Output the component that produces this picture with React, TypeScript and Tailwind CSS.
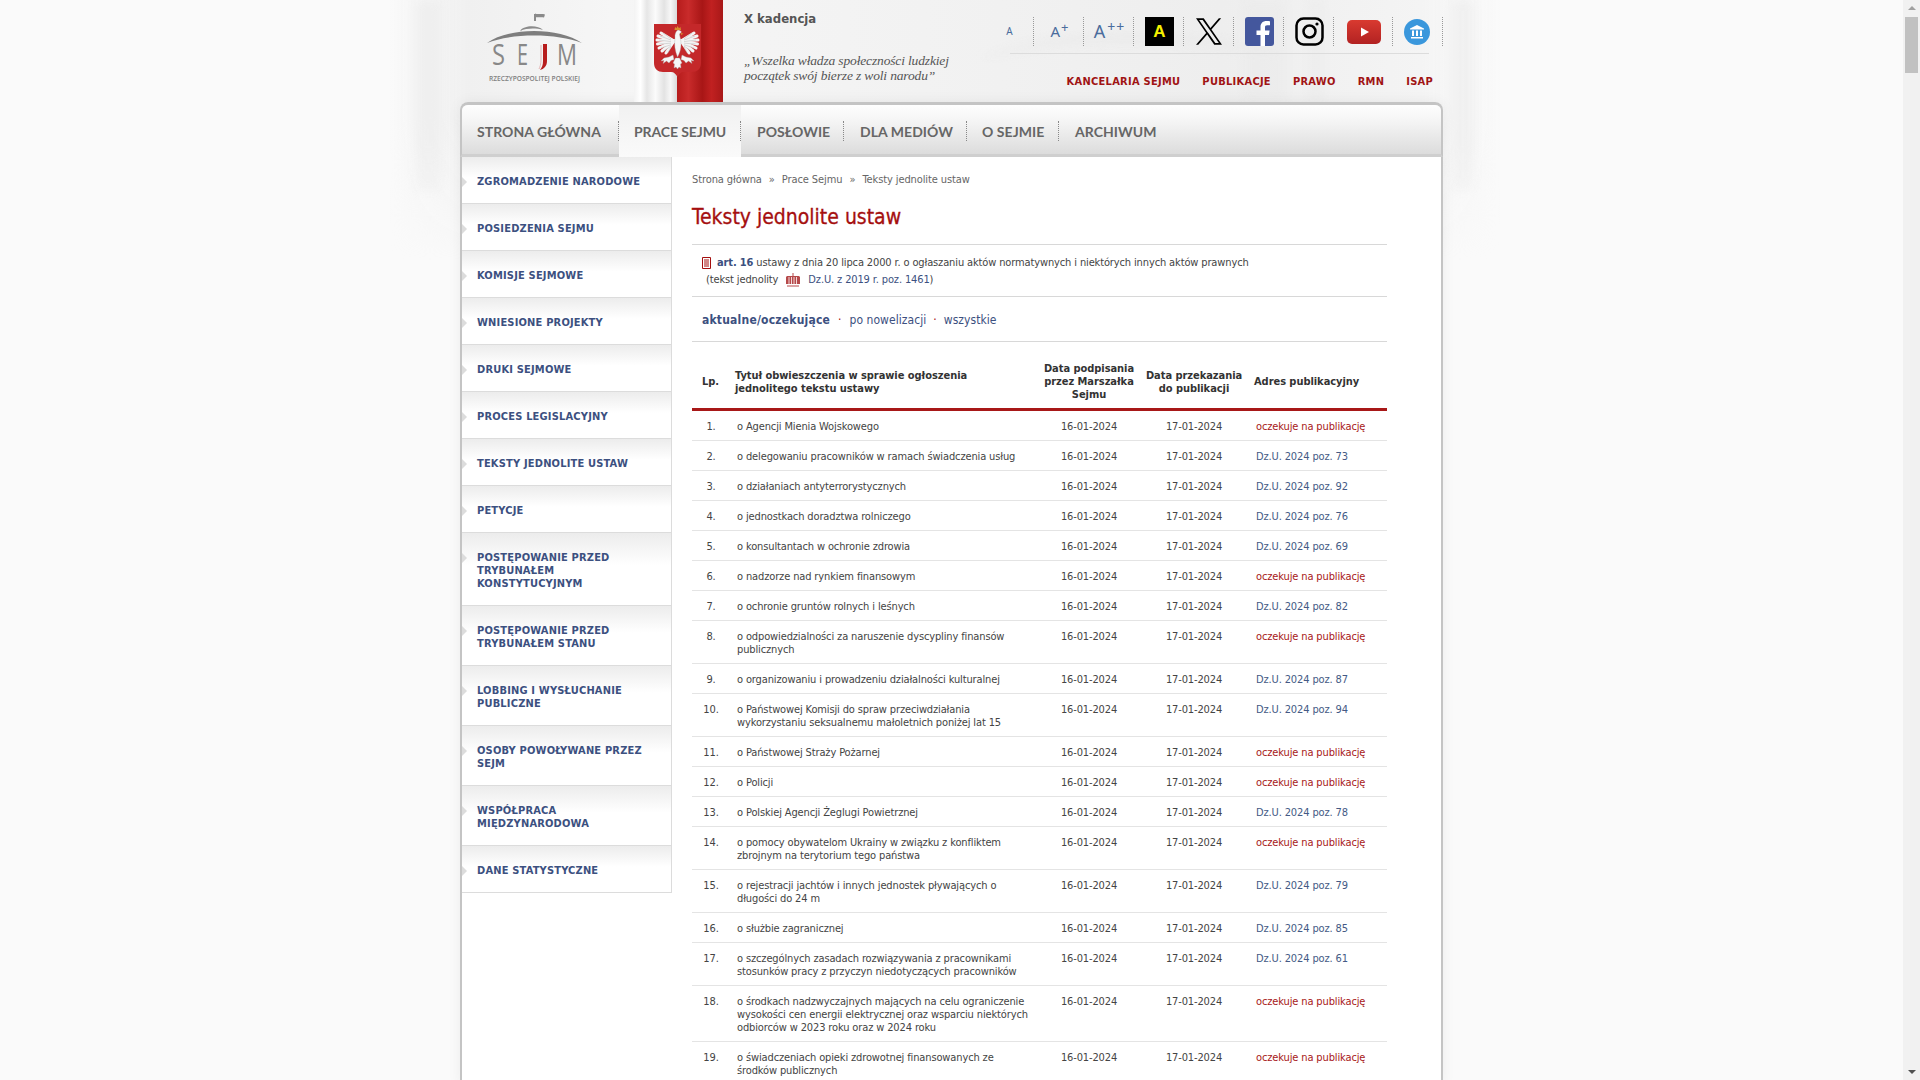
import React from 'react';

const sideItems = [
  ['ZGROMADZENIE NARODOWE'],
  ['POSIEDZENIA SEJMU'],
  ['KOMISJE SEJMOWE'],
  ['WNIESIONE PROJEKTY'],
  ['DRUKI SEJMOWE'],
  ['PROCES LEGISLACYJNY'],
  ['TEKSTY JEDNOLITE USTAW'],
  ['PETYCJE'],
  ['POSTĘPOWANIE PRZED', 'TRYBUNAŁEM', 'KONSTYTUCYJNYM'],
  ['POSTĘPOWANIE PRZED', 'TRYBUNAŁEM STANU'],
  ['LOBBING I WYSŁUCHANIE', 'PUBLICZNE'],
  ['OSOBY POWOŁYWANE PRZEZ', 'SEJM'],
  ['WSPÓŁPRACA', 'MIĘDZYNARODOWA'],
  ['DANE STATYSTYCZNE'],
];

const WAIT = 'oczekuje na publikację';

const rows: { title: string[]; pub: string }[] = [
  { title: ['o Agencji Mienia Wojskowego'], pub: WAIT },
  { title: ['o delegowaniu pracowników w ramach świadczenia usług'], pub: 'Dz.U. 2024 poz. 73' },
  { title: ['o działaniach antyterrorystycznych'], pub: 'Dz.U. 2024 poz. 92' },
  { title: ['o jednostkach doradztwa rolniczego'], pub: 'Dz.U. 2024 poz. 76' },
  { title: ['o konsultantach w ochronie zdrowia'], pub: 'Dz.U. 2024 poz. 69' },
  { title: ['o nadzorze nad rynkiem finansowym'], pub: WAIT },
  { title: ['o ochronie gruntów rolnych i leśnych'], pub: 'Dz.U. 2024 poz. 82' },
  { title: ['o odpowiedzialności za naruszenie dyscypliny finansów', 'publicznych'], pub: WAIT },
  { title: ['o organizowaniu i prowadzeniu działalności kulturalnej'], pub: 'Dz.U. 2024 poz. 87' },
  { title: ['o Państwowej Komisji do spraw przeciwdziałania', 'wykorzystaniu seksualnemu małoletnich poniżej lat 15'], pub: 'Dz.U. 2024 poz. 94' },
  { title: ['o Państwowej Straży Pożarnej'], pub: WAIT },
  { title: ['o Policji'], pub: WAIT },
  { title: ['o Polskiej Agencji Żeglugi Powietrznej'], pub: 'Dz.U. 2024 poz. 78' },
  { title: ['o pomocy obywatelom Ukrainy w związku z konfliktem', 'zbrojnym na terytorium tego państwa'], pub: WAIT },
  { title: ['o rejestracji jachtów i innych jednostek pływających o', 'długości do 24 m'], pub: 'Dz.U. 2024 poz. 79' },
  { title: ['o służbie zagranicznej'], pub: 'Dz.U. 2024 poz. 85' },
  { title: ['o szczególnych zasadach rozwiązywania z pracownikami', 'stosunków pracy z przyczyn niedotyczących pracowników'], pub: 'Dz.U. 2024 poz. 61' },
  { title: ['o środkach nadzwyczajnych mających na celu ograniczenie', 'wysokości cen energii elektrycznej oraz wsparciu niektórych', 'odbiorców w 2023 roku oraz w 2024 roku'], pub: WAIT },
  { title: ['o świadczeniach opieki zdrowotnej finansowanych ze', 'środków publicznych'], pub: WAIT },
];

const SejmLogo = () => (
  <svg width="95" height="72" viewBox="0 0 95 72" className="mt-[12px] shrink-0 overflow-visible">
    <path d="M48 2v7" stroke="#8a8a8a" strokeWidth="2" />
    <path d="M48 1.500c3 1.500 6-.5 10 1l-1 3c-3-1-6 .5-9-.5z" fill="#8a8a8a" />
    <path d="M33 19c4-6 18-6 23-1-7-2-16-2-23 1z" fill="#8a8a8a" />
    <path d="M0 31C22 15 72 15 95 31 70 21 24 21 0 31z" fill="#7e7e7e" />
    <text x="5" y="53" textLength="13" lengthAdjust="spacingAndGlyphs" fontFamily="'Open Sans',sans-serif" fontSize="29" fill="#888">S</text>
    <text x="30" y="53" textLength="11" lengthAdjust="spacingAndGlyphs" fontFamily="'Open Sans',sans-serif" fontSize="29" fill="#888">E</text>
    <path d="M56 32h4v17c0 5-3 8-7 9 2-3 3-5 3-9z" fill="#b71c1c" />
    <path d="M54 33v15c0 4-1 7-2 9" stroke="#e5b5b5" fill="none" />
    <text x="70" y="53" textLength="20" lengthAdjust="spacingAndGlyphs" fontFamily="'Open Sans',sans-serif" fontSize="29" fill="#888">M</text>
    <text x="2" y="69" textLength="91" lengthAdjust="spacingAndGlyphs" fontFamily="'Open Sans',sans-serif" fontSize="7" fontWeight="600" fill="#808080">RZECZYPOSPOLITEJ POLSKIEJ</text>
  </svg>
);

const feathers = [
  [7, 9], [4, 12], [3, 16], [3.500, 20], [5, 24], [8, 27], [12, 29],
];

const Shield = () => (
  <svg width="47" height="53" viewBox="0 0 47 53" className="absolute left-[20px] top-[24px]">
    <path d="M0 0h47v39c0 6-4 9-9 9h-8c-3 0-5 2-6.500 5-1.500-3-3.500-5-6.500-5H9c-5 0-9-3-9-9z" fill="#c4282a" />
    <g strokeLinecap="round" strokeWidth="3">
      {feathers.map(([x, y]) => (
        <g key={x + '-' + y}>
          <path d={`M20 17 L${x} ${y}`} stroke="#f4f4f4" />
          <path d={`M27 17 L${47 - x} ${y}`} stroke="#f4f4f4" />
        </g>
      ))}
    </g>
    <g strokeWidth=".4" stroke="#a8a8a8">
      {feathers.map(([x, y]) => (
        <g key={x + '_' + y}>
          <path d={`M17 ${18 + (y - 17) * 0.4} L${x + 2} ${y}`} />
          <path d={`M30 ${18 + (y - 17) * 0.4} L${45 - x} ${y}`} />
        </g>
      ))}
    </g>
    <g fill="#f6f6f6" stroke="#a9a9a9" strokeWidth=".35">
      <path d="M21 14c-.5-4 1-7 3-8 1.500 0 3 1 3.500 2l-2 2 .5 3c2 7 1 14-2.500 20-2.500-6-3.500-13-2.500-19z" />
      <path d="M19 31l-4 2-5 1-3 3 3-.5-1 3 3.500-2.500 2.500 2 2-2.500 3-1zM28 31l4 2 5 1 3 3-3-.5 1 3-3.500-2.500-2.500 2-2-2.500-3-1z" />
      <path d="M21.500 34h4l2.500 5-1.500 1 .5 4-2-1-1.500 2-1.500-2-2 1 .5-4-1.500-1z" />
    </g>
    <path d="M20.500 6l.6-3 1.400 1.300L23.500 2 25 4.300 26.400 3l.6 3z" fill="#d9902e" />
    <path d="M27 9l2.500.8-2.500 1.200z" fill="#d9902e" />
  </svg>
);

const CellIcon = ({ children, wide }: { children: React.ReactNode; wide?: boolean }) => (
  <div className={`${wide ? 'w-[59px]' : 'w-[50px]'} h-[29px] pl-[2px] flex items-center justify-center border-r border-dotted border-[#999]`}>
    {children}
  </div>
);

const Header = () => (
  <div className="relative flex h-[102px] w-[983px] mx-auto">
    <div className="ml-[27px]"><SejmLogo /></div>
    <div className="relative ml-[52px] w-[89px] h-[102px] shrink-0 flex">
      <div className="w-[43px] bg-[linear-gradient(90deg,#f3f3f3,#fff_15%,#e6e6e6_30%,#fbfbfb_50%,#e3e3e3_70%,#f7f7f7_85%,#dadada)]" />
      <div className="w-[46px] bg-[linear-gradient(90deg,#b61c1c,#c92b2b_25%,#a81616_55%,#c12121_75%,#a81818)]" />
      <Shield />
    </div>
    <div className="ml-[21px] w-[240px] shrink-0 pt-[12px] text-[#555]">
      <div className="font-['DejaVu_Sans_Condensed','DejaVu_Sans',sans-serif] text-[13px] leading-[14px] font-bold">X kadencja</div>
      <div className="mt-[27px] font-['Liberation_Serif',serif] italic text-[13.500px] leading-[15px] tracking-[-0.15px] whitespace-nowrap">
        „Wszelka władza społeczności ludzkiej
        <br />
        początek swój bierze z woli narodu”
      </div>
    </div>
    <div className="w-[459px] shrink-0 pt-[17px]">
      <div className="flex">
        <CellIcon><span className="font-['Noto_Sans',sans-serif] text-[10px] text-[#4a6c9c]">A</span></CellIcon>
        <CellIcon><span className="font-['Noto_Sans',sans-serif] text-[15px] text-[#4a6c9c]">A<sup className="text-[13px] top-[-5px] ml-[1px]">+</sup></span></CellIcon>
        <CellIcon><span className="font-['Noto_Sans',sans-serif] text-[18px] text-[#4a6c9c] whitespace-nowrap">A<sup className="text-[14px] top-[-6px] ml-[2px] tracking-[1px]">++</sup></span></CellIcon>
        <CellIcon>
          <div className="w-[29px] h-[29px] bg-black flex items-center justify-center font-['Liberation_Sans',sans-serif] font-bold text-[17px] text-[#f5f000]">A</div>
        </CellIcon>
        <CellIcon>
          <svg width="26" height="27" viewBox="0 0 1200 1227" className="mr-[2px]">
            <path d="M714 519 1161 0h-106L667 451 357 0H0l468 682L0 1226h106l409-476 328 476h357L714 519zM569 688l-47-68L144 80h163l304 435 48 68 395 565H891L569 688z" />
          </svg>
        </CellIcon>
        <CellIcon>
          <svg width="29" height="29" viewBox="0 0 29 29">
            <rect width="29" height="29" rx="3" fill="#44579d" />
            <path d="M20 29V18h4l.6-4.500H20v-3c0-1.300.4-2.200 2.300-2.200H25V4.300C24.500 4.200 23 4 21.400 4 18 4 15.500 6.100 15.500 10v3.500h-4V18h4v11z" fill="#fff" />
          </svg>
        </CellIcon>
        <CellIcon>
          <svg width="29" height="29" viewBox="0 0 29 29" fill="none" stroke="#000">
            <rect x="1.500" y="1.500" width="26" height="26" rx="7" strokeWidth="2.500" />
            <circle cx="14.500" cy="14.500" r="6" strokeWidth="2.500" />
            <circle cx="22" cy="7" r="1.600" fill="#000" stroke="none" />
          </svg>
        </CellIcon>
        <CellIcon wide>
          <svg width="34" height="24" viewBox="0 0 34 24">
            <defs>
              <linearGradient id="yt" x1="0" y1="0" x2="0" y2="1">
                <stop offset="0" stopColor="#d93a30" />
                <stop offset="1" stopColor="#b22222" />
              </linearGradient>
            </defs>
            <rect width="34" height="24" rx="5" fill="url(#yt)" />
            <path d="M14 7.500v9l8-4.500z" fill="#fff" />
          </svg>
        </CellIcon>
        <CellIcon>
          <svg width="26" height="26" viewBox="0 0 26 26" className="mr-[3px]">
            <circle cx="13" cy="13" r="13" fill="#3a97dc" />
            <path d="M13 6l7 3.500v1H6v-1zM7 18h12v1.500H7zM8 11.500h2v5.500H8zM12 11.500h2v5.500h-2zM16 11.500h2v5.500h-2z" fill="#fff" />
          </svg>
        </CellIcon>
      </div>
      <div className="mt-[7px] ml-[26px] mr-[14px] h-px bg-[#dcdcdc]" />
      <div className="mt-[21px] pr-[10px] flex justify-end gap-[22px] font-['DejaVu_Sans_Condensed','DejaVu_Sans',sans-serif] font-bold text-[11px] leading-[13px] tracking-[0.27px] text-[#a01414]">
        <span>KANCELARIA SEJMU</span>
        <span>PUBLIKACJE</span>
        <span>PRAWO</span>
        <span>RMN</span>
        <span>ISAP</span>
      </div>
    </div>
  </div>
);

const navSep = 'relative after:absolute after:right-0 after:top-[16px] after:h-[20px] after:border-r after:border-dotted after:border-[#888]';

const Nav = () => (
  <div className="flex h-[55px] rounded-t-[8px] border-t-[3px] border-x-[2px] border-b-[3px] border-[#c4c4c4] border-b-[#cfcfcf] bg-[linear-gradient(#fefefe,#f4f4f4_35%,#dcdcdc)] font-['Lato',sans-serif] font-bold text-[14px] tracking-[0.05px] leading-[54px] text-[#666]">
    <div className={`w-[157px] pl-[15px] ${navSep}`}>STRONA GŁÓWNA</div>
    <div className={`w-[122px] h-[52px] pl-[15px] tracking-[-0.1px] bg-[linear-gradient(#f1f1f1,#fafafa)] ${navSep}`}>PRACE SEJMU</div>
    <div className={`w-[103px] pl-[16px] ${navSep}`}>POSŁOWIE</div>
    <div className={`w-[123px] pl-[16px] ${navSep}`}>DLA MEDIÓW</div>
    <div className={`w-[92px] pl-[15px] ${navSep}`}>O SEJMIE</div>
    <div className="pl-[16px]">ARCHIWUM</div>
  </div>
);

const Sidebar = () => (
  <div className="w-[210px] shrink-0 font-['DejaVu_Sans_Condensed','DejaVu_Sans',sans-serif] font-bold text-[11px] leading-[13px] tracking-[0.18px] text-[#3c5080]">
    {sideItems.map((lines, i) => (
      <div
        key={i}
        className="relative pl-[15px] pt-[18px] pb-[15px] border-b border-r border-[#dcdcdc] bg-[linear-gradient(#ececec,#fff_45%)] after:absolute after:left-0 after:top-[20px] after:border-y-[5px] after:border-l-[5px] after:border-y-transparent after:border-l-[#dcdcdc]"
      >
        {lines.map((l) => (
          <div key={l}>{l}</div>
        ))}
      </div>
    ))}
  </div>
);

const Content = () => (
  <div className="ml-[20px] w-[695px] shrink-0 font-['DejaVu_Sans_Condensed','DejaVu_Sans',sans-serif] text-[11px] leading-[13px] tracking-[-0.13px] text-[#444]">
    <div className="pt-[16px] text-[#666] tracking-[-0.1px]">
      Strona główna <span className="mx-[4px]">»</span> Prace Sejmu <span className="mx-[4px]">»</span> Teksty jednolite ustaw
    </div>
    <h1 className="mt-[19px] text-[21px] leading-[24px] tracking-normal font-normal text-[#a50f0f] [-webkit-text-stroke:0.3px_#a50f0f]">Teksty jednolite ustaw</h1>
    <div className="mt-[15px] border-y border-[#d8d8d8] pt-[9px] pb-[8px] leading-[17px]">
      <div className="flex items-center pl-[10px]">
        <svg width="9" height="12" viewBox="0 0 9 12" className="mr-[6px]">
          <path d="M.5.500h8v11h-8z" fill="#fff" stroke="#a50f0f" />
          <path d="M2 3h5M2 5h5M2 7h5M2 9h5" stroke="#a50f0f" />
        </svg>
        <b className="text-[#3c5080] mr-[3px]">art. 16</b> ustawy z dnia 20 lipca 2000 r. o ogłaszaniu aktów normatywnych i niektórych innych aktów prawnych
      </div>
      <div className="flex items-center pl-[14px]">
        (tekst jednolity
        <svg width="16" height="14" viewBox="0 0 16 14" className="mx-[7px]">
          <path d="M2 3h12l1 1v7H1V4z" fill="#b5494a" />
          <path d="M4 4v7M6.500 4v7M9 4v7M11.500 4v7" stroke="#f3d8d8" />
          <path d="M8 0v3M2 13h12" stroke="#b5494a" />
        </svg>
        <span className="text-[#3c5080]">Dz.U. z 2019 r. poz. 1461</span>)
      </div>
    </div>
    <div className="flex items-center h-[45px] pt-[2px] pl-[10px] border-b border-[#d8d8d8] text-[12px] tracking-[0.05px] text-[#3c5080]">
      <b className="tracking-[0.2px]">aktualne/oczekujące</b>
      <span className="mx-[8px] text-[#a50f0f]">·</span>
      <span>po nowelizacji</span>
      <span className="mx-[7px] text-[#a50f0f]">·</span>
      <span>wszystkie</span>
    </div>
    <table className="mt-[12px] w-[695px] table-fixed border-collapse">
      <colgroup>
        <col className="w-[43px]" />
        <col className="w-[304px]" />
        <col className="w-[100px]" />
        <col className="w-[110px]" />
        <col className="w-[138px]" />
      </colgroup>
      <thead>
        <tr className="h-[55px] border-b-[3px] border-[#a81818] font-bold text-[#333] tracking-[-0.05px]">
          <th className="pl-[10px] pt-[2px] text-left">Lp.</th>
          <th className="pt-[2px] text-left">
            Tytuł obwieszczenia w sprawie ogłoszenia
            <br />
            jednolitego tekstu ustawy
          </th>
          <th className="pt-[2px]">
            Data podpisania
            <br />
            przez Marszałka
            <br />
            Sejmu
          </th>
          <th className="pt-[2px]">
            Data przekazania
            <br />
            do publikacji
          </th>
          <th className="pl-[5px] pt-[2px] text-left">Adres publikacyjny</th>
        </tr>
      </thead>
      <tbody>
        {rows.map((r, i) => (
          <tr key={i} className="border-b border-[#e4e4e4] align-top">
            <td className="pt-[9px] pb-[7px] pr-[5px] text-center">{i + 1}.</td>
            <td className="pt-[9px] pb-[7px] pl-[2px]">
              {r.title.map((t) => (
                <div key={t} className="whitespace-nowrap">{t}</div>
              ))}
            </td>
            <td className="pt-[9px] pb-[7px] text-center">16-01-2024</td>
            <td className="pt-[9px] pb-[7px] text-center">17-01-2024</td>
            <td className={`pt-[9px] pb-[7px] pl-[7px] whitespace-nowrap ${r.pub === WAIT ? 'text-[#a81818]' : 'text-[#445a85]'}`}>{r.pub}</td>
          </tr>
        ))}
      </tbody>
    </table>
  </div>
);

const Scrollbar = () => (
  <div className="w-[17px] h-screen shrink-0 bg-[#f1f1f1] flex flex-col items-center justify-between">
    <div className="flex flex-col items-center w-full">
      <div className="mt-[6px] border-x-[4px] border-b-[4px] border-x-transparent border-b-[#a0a0a0]" />
      <div className="mt-[7px] w-[13px] h-[56px] bg-[#c1c1c1]" />
    </div>
    <div className="mb-[6px] border-x-[4px] border-t-[4px] border-x-transparent border-t-[#505050]" />
  </div>
);

const Backdrop = () => (
  <svg width="1110" height="260" viewBox="0 0 1110 260" className="absolute left-[390px] top-0 [mask-image:linear-gradient(#000_55%,transparent)]">
    <defs>
      <filter id="soft"><feGaussianBlur stdDeviation="5" /></filter>
    </defs>
    <g filter="url(#soft)" fill="#e9e9e9" opacity=".45">
      <rect x="25" y="0" width="26" height="190" />
      <rect x="855" y="0" width="40" height="102" />
      <rect x="920" y="0" width="12" height="102" />
      <rect x="1062" y="0" width="22" height="190" />
    </g>
    <path d="M590 60c60-30 200-40 300-5-90-15-220-20-300 5z" fill="#e9e9e9" opacity=".7" filter="url(#soft)" />
  </svg>
);

export default function App() {
  return (
    <div className="flex h-screen overflow-hidden bg-[#fafafa]">
      <div className="relative flex-1 h-screen overflow-hidden">
        <div className="absolute left-[390px] top-0 w-[1110px] h-[260px] bg-[linear-gradient(90deg,transparent,#f0f0f0_7%,#f6f6f6_20%,#f1f1f1_55%,#eeeeee_75%,#f4f4f4_93%,transparent)] [mask-image:linear-gradient(#000_45%,transparent)]" />
        <Backdrop />
        <div className="relative">
          <Header />
          <div className="w-[983px] mx-auto shadow-[0_0_14px_rgba(0,0,0,0.06)] rounded-t-[8px] bg-white">
            <Nav />
            <div className="flex min-h-[923px] border-x-[2px] border-[#c4c4c4] bg-white">
              <Sidebar />
              <Content />
            </div>
          </div>
        </div>
      </div>
      <Scrollbar />
    </div>
  );
}
